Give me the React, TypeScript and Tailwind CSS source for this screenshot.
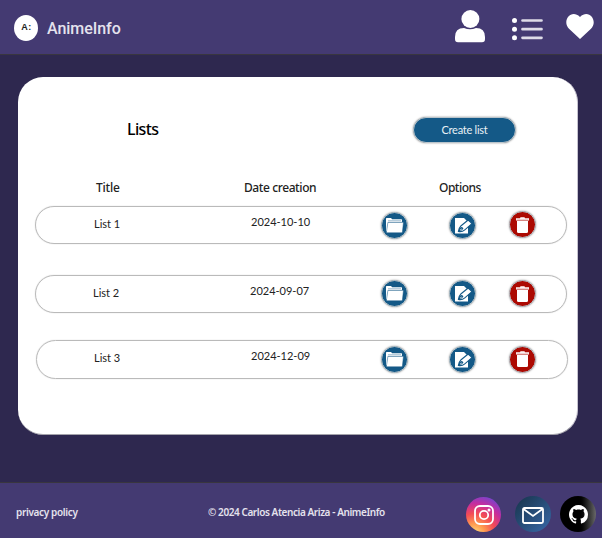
import type { ReactNode } from 'react';

const rows = [
  { title: 'List 1', date: '2024-10-10', box: 'ml-[17px] mt-[9px] h-[38px]', left: 'pl-[58px]', dateCell: 'w-[129px]', titlePad: 'pb-[1px]', datePad: 'pb-[5px]', iconPad: '' },
  { title: 'List 2', date: '2024-09-07', box: 'ml-[17px] mt-[31px] h-[38px]', left: 'pl-[57px]', dateCell: 'w-[130px]', titlePad: 'pb-[2px]', datePad: 'pb-[5px]', iconPad: 'pb-[2px]' },
  { title: 'List 3', date: '2024-12-09', box: 'ml-[18px] mt-[27px] h-[39px]', left: 'pl-[57px]', dateCell: 'w-[129px]', titlePad: 'pb-[3px]', datePad: 'pb-[7px]', iconPad: '' },
];

function Round({ children, color }: { children: ReactNode; color: string }) {
  return (
    <button className={`flex size-[27px] shrink-0 items-center justify-center rounded-full border border-[#b6c3ca] shadow-[0_0_2px_#999] ${color}`}>
      {children}
    </button>
  );
}

function Folder() {
  return (
    <svg width="19" height="17" viewBox="0 0 19 17">
      <path d="M1 14V1.6Q1 1 1.7 1H6L7.2 2.3H16.5Q17 2.3 17 3V5H3.3L2 14Z" fill="#fff" />
      <path d="M3 3.7H16" stroke="#8fb1c8" strokeWidth=".8" />
      <path d="M2.9 5.3H18Q18.5 5.3 18.4 6L17.4 15Q17.3 15.8 16.5 15.8H2Q1.3 15.8 1.4 15Z" fill="#fff" stroke="#145987" strokeWidth=".5" />
    </svg>
  );
}

function Edit() {
  return (
    <svg width="21" height="19" viewBox="0 0 21 19">
      <path d="M3 2H12L16 6V17.5H3Z" fill="#fff" />
      <path d="M16.2 4 9.1 9.7Q7 11.8 6.4 15.4Q10 16.2 12.8 13.8L20 7.6Z" fill="#fff" stroke="#145987" strokeWidth="1.1" />
      <path d="M6.4 15.4Q7.2 11.8 9 11Q11.3 10.9 11.4 12.8Q10 15.2 6.4 15.4Z" fill="#145987" />
      <path d="m8.2 14 1.5-1" stroke="#fff" strokeWidth=".9" />
    </svg>
  );
}

function Trash() {
  return (
    <svg width="15" height="18" viewBox="0 0 15 18">
      <path d="M1 2.3H5L5.5 1.3H9.5L10 2.3H14V4.4H1Z" fill="#fff" />
      <path d="M2 5H13V15.5Q13 17 11.5 17H3.5Q2 17 2 15.5Z" fill="#fff" />
      <path d="M1.5 3.3H13.5" stroke="#d99" strokeWidth=".6" />
    </svg>
  );
}

export default function App() {
  return (
    <div className="flex h-[538px] w-[602px] flex-col overflow-hidden bg-[#2e284f] font-['Noto_Sans',sans-serif]">
      <header className="flex h-[55px] shrink-0 items-start border-b border-[#39363f] bg-[#443a72]">
        <div className="mt-[15px] ml-[14px] flex h-[26px] w-[24px] items-center justify-center rounded-[50%] bg-white pl-px font-['Liberation_Sans',sans-serif] text-[9px] font-bold tracking-[0.5px] text-[#222]">A:</div>
        <h1 className="mt-[17px] ml-[9px] w-[80px] font-['Roboto',sans-serif] text-base leading-6 font-medium tracking-[-0.05px] whitespace-nowrap text-[#e5e2ed]">AnimeInfo</h1>
        <svg className="mt-[10px] ml-[327px]" width="32" height="34" viewBox="0 0 32 34" fill="#fff">
          <circle cx="16.4" cy="9" r="9" />
          <path d="M1 29V27Q1 18 10 18Q16 20.5 22 18Q31 18 31 27V29Q31 32.3 28 32.3H4Q1 32.3 1 29Z" />
        </svg>
        <svg className="mt-[16px] ml-[25px]" width="33" height="26" viewBox="0 0 33 26" fill="#fff">
          <circle cx="3.5" cy="4.5" r="2.5" /><circle cx="3.5" cy="13.2" r="2.5" /><circle cx="3.5" cy="21.8" r="2.5" />
          <path d="M11.5 4.5H30.5M11.5 13.2H30.5M11.5 21.8H30.5" stroke="#dedce8" strokeWidth="2.7" strokeLinecap="round" />
        </svg>
        <svg className="mt-[13px] ml-[21px]" width="29" height="27" viewBox="0 0 29 27">
          <path d="M15 26 4 15.8C-3.5 8 6-4.8 15 3.9 24-4.8 33.5 8 26 15.8Z" fill="#fff" />
        </svg>
      </header>

      <main className="mt-[22px] ml-[18px] h-[358px] w-[560px] shrink-0 rounded-[25px] border-r border-b border-r-[#c6c3cf] border-b-[#a4a3ab] bg-white">
        <div className="flex h-[66px] pt-[40px]">
          <h2 className="ml-[109px] w-[286px] text-base leading-6 font-medium tracking-[-0.65px] text-black">Lists</h2>
          <button className="h-[26px] w-[103px] shrink-0 rounded-full border border-[#b9c4cb] bg-[#145987] pb-px font-['Lato',sans-serif] text-[11px] leading-[22px] tracking-[-0.25px] text-[#e9f1f5] shadow-[0_0_2px_#888]">Create list</button>
        </div>
        <div className="mt-[35px] flex h-[19px] text-[12px] leading-[20px] font-medium text-[#222]">
          <span className="ml-[78px] w-[148px] tracking-[-0.2px]">Title</span>
          <span className="w-[195px] tracking-[-0.4px]">Date creation</span>
          <span className="tracking-[-0.5px]">Options</span>
        </div>
        {rows.map((row) => (
          <section key={row.title} className={`flex w-[532px] items-center rounded-full border border-[#bababa] font-['Lato',sans-serif] text-[11px] text-[#222] shadow-[0_0_1px_#bbb] ${row.box} ${row.left}`}>
            <span className={`w-[157px] shrink-0 ${row.titlePad}`}>{row.title}</span>
            <span className={`shrink-0 ${row.datePad} ${row.dateCell}`}>{row.date}</span>
            <div className={`ml-px ${row.iconPad}`}><Round color="bg-[#145987]"><Folder /></Round></div>
            <div className={`ml-[41px] ${row.iconPad}`}><Round color="bg-[#145987]"><Edit /></Round></div>
            <div className="ml-[33px] pb-px"><Round color="bg-[#ac0a02]"><Trash /></Round></div>
          </section>
        ))}
      </main>

      <footer className="mt-auto flex h-[56px] shrink-0 items-start border-t border-[#39363f] bg-[#443a72] text-[10px] leading-4 font-semibold whitespace-nowrap text-[#e5e2ed]">
        <a className="mt-[21px] ml-[16px] w-[192px] tracking-[-0.35px]">privacy policy</a>
        <span className="mt-[21px] w-[258px] tracking-[-0.42px]">© 2024 Carlos Atencia Ariza - AnimeInfo</span>
        <div className="mt-[14px] flex size-[35px] shrink-0 items-center justify-center rounded-full bg-[radial-gradient(circle_at_25%_105%,#ffe17c_0%,#ff9b50_22%,#f34b55_45%,#c52d9f_67%,#594de0_95%)]">
          <svg width="20" height="20" viewBox="0 0 20 20" fill="none" stroke="#fff" strokeWidth="1.8"><rect x="1" y="1" width="18" height="18" rx="5" /><circle cx="10" cy="10" r="4.2" /><circle cx="15" cy="5" r=".6" /></svg>
        </div>
        <div className="mt-[13px] ml-[14px] flex size-[36px] shrink-0 items-center justify-center rounded-full bg-linear-to-br from-[#17334a] to-[#3969aa] pt-[3px]">
          <svg width="22" height="17" viewBox="0 0 22 17" fill="none" stroke="#fff" strokeWidth="1.8"><rect x="1" y="1" width="20" height="15" rx="1.5" /><path d="m1.5 2 9.5 7 9.5-7" /></svg>
        </div>
        <div className="mt-[13px] ml-[9px] flex size-[36px] shrink-0 items-center justify-center rounded-full bg-linear-to-r from-black from-50% to-[#696969]">
          <svg width="19" height="19" viewBox="0 0 16 16" fill="#fff"><path d="M8 0C3.58 0 0 3.58 0 8c0 3.54 2.29 6.53 5.47 7.59.4.07.55-.17.55-.38 0-.19-.01-.82-.01-1.49-2.01.37-2.53-.49-2.69-.94-.09-.23-.48-.94-.82-1.13-.28-.15-.68-.52-.01-.53.63-.01 1.08.58 1.23.82.72 1.21 1.87.87 2.33.66.07-.52.28-.87.51-1.07-1.78-.2-3.64-.89-3.64-3.95 0-.87.31-1.59.82-2.15-.08-.2-.36-1.02.08-2.12 0 0 .67-.21 2.2.82.64-.18 1.32-.27 2-.27s1.36.09 2 .27c1.53-1.04 2.2-.82 2.2-.82.44 1.1.16 1.92.08 2.12.51.56.82 1.27.82 2.15 0 3.07-1.87 3.75-3.65 3.95.29.25.54.73.54 1.48 0 1.07-.01 1.93-.01 2.2 0 .21.15.46.55.38A8.01 8.01 0 0 0 16 8c0-4.42-3.58-8-8-8Z" /></svg>
        </div>
      </footer>
    </div>
  );
}
